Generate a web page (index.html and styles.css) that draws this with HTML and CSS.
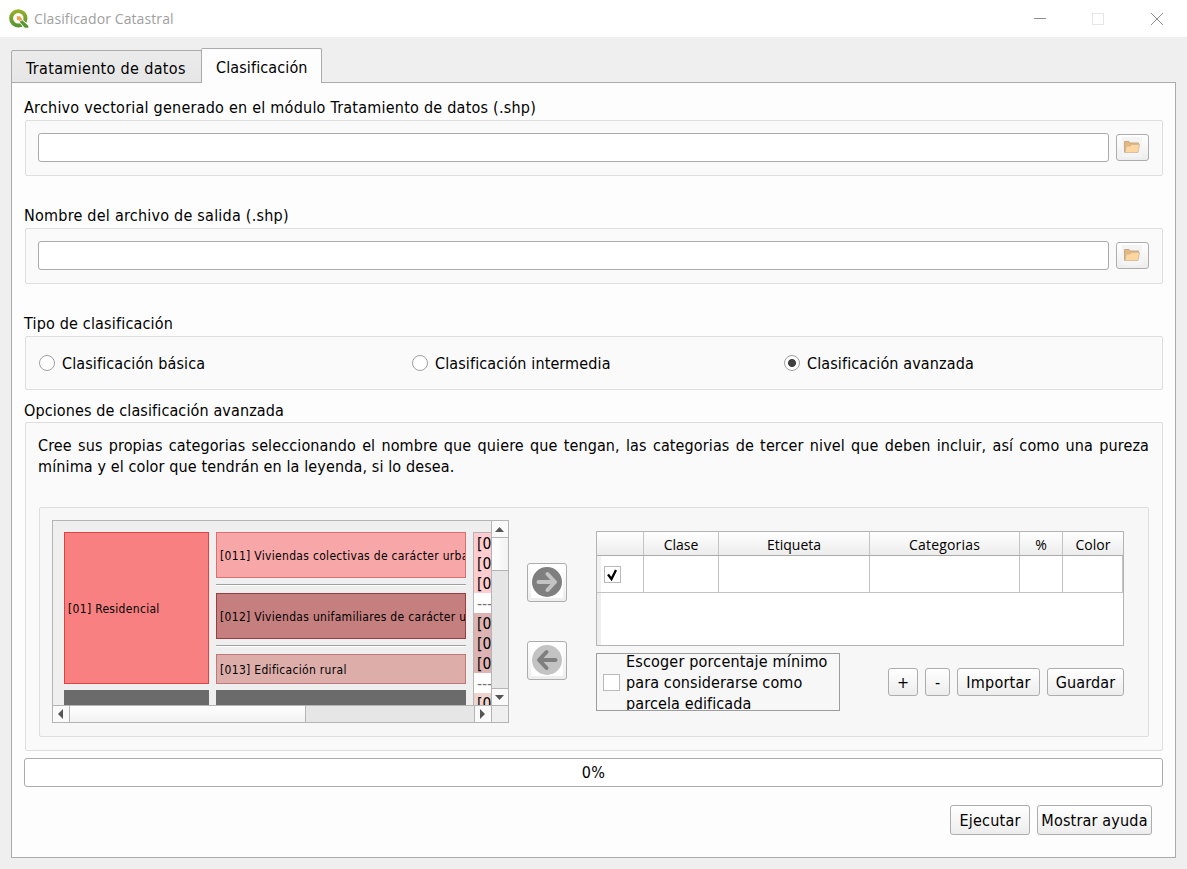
FILE: index.html
```html
<!DOCTYPE html>
<html lang="es">
<head>
<meta charset="utf-8">
<title>Clasificador Catastral</title>
<link rel="stylesheet" href="styles.css">
</head>
<body>
<header class="titlebar">
  <svg class="logo" width="20" height="20" viewBox="0 0 20 20">
    <defs><linearGradient id="q" x1="0" y1="0" x2="0" y2="1"><stop offset="0" stop-color="#93b023"/><stop offset="1" stop-color="#589632"/></linearGradient></defs>
    <circle cx="9.3" cy="9.3" r="7.2" fill="#fff" stroke="url(#q)" stroke-width="3.9"/>
    <path d="M9 12 L12.5 9.5 L20 16 V19.5 H15.5 Z" fill="#fff"/>
    <path d="M10.6 12.8 L13.2 11.2 L19.3 16.8 V18.8 H15.8 Z" fill="#589632"/>
    <path d="M7.8 7.3 H11.2 L13.2 10.4 L10.8 12 L7.8 10.4 Z" fill="#f0a04b"/>
  </svg>
  <span class="title">Clasificador Catastral</span>
  <div class="controls">
    <svg width="12" height="12" viewBox="0 0 12 12"><path d="M0 5.5H12" stroke="#8f8f8f"/></svg>
    <svg width="12" height="12" viewBox="0 0 12 12"><rect x=".5" y=".5" width="11" height="11" fill="none" stroke="#e6e6e6"/></svg>
    <svg class="close" width="12" height="12" viewBox="0 0 12 12"><path d="M0 0L12 12M12 0L0 12" stroke="#8f8f8f"/></svg>
  </div>
</header>
<nav class="tabs">
  <div class="tab"><span class="ls-xl">Tratamiento de datos</span></div>
  <div class="tab active"><span class="ls-s">Clasificación</span></div>
</nav>
<main class="panel">
  <div class="label first"><span class="ls-l">Archivo vectorial generado en el módulo Tratamiento de datos (.shp)</span></div>
  <section class="group file">
    <div class="input"></div>
    <div class="btn browse"><svg width="20" height="20" viewBox="0 0 20 20"><rect width="20" height="20" fill="#f4f4f4"/><path d="M2.5 15.5V4.5H7L8 6H16.5V9" fill="#e8b878" stroke="#c3a98a"/><path d="M3 15.5L4.5 9H8.5L9.5 7.5H17.5L16 15.5Z" fill="#ffd79e" stroke="#c9b79f" stroke-width=".8"/></svg></div>
  </section>
  <div class="label"><span class="ls-l">Nombre del archivo de salida (.shp)</span></div>
  <section class="group file">
    <div class="input"></div>
    <div class="btn browse"><svg width="20" height="20" viewBox="0 0 20 20"><rect width="20" height="20" fill="#f4f4f4"/><path d="M2.5 15.5V4.5H7L8 6H16.5V9" fill="#e8b878" stroke="#c3a98a"/><path d="M3 15.5L4.5 9H8.5L9.5 7.5H17.5L16 15.5Z" fill="#ffd79e" stroke="#c9b79f" stroke-width=".8"/></svg></div>
  </section>
  <div class="label"><span class="ls-m">Tipo de clasificación</span></div>
  <section class="group radios">
    <div class="option"><i class="radio"></i><span class="ls-s">Clasificación básica</span></div>
    <div class="option"><i class="radio"></i><span class="ls-s">Clasificación intermedia</span></div>
    <div class="option"><i class="radio on"></i><span class="ls-s">Clasificación avanzada</span></div>
  </section>
  <div class="label tight"><span class="ls-s">Opciones de clasificación avanzada</span></div>
  <section class="group advanced">
    <div class="intro">
      <p class="justified ls-s">Cree sus propias categorias seleccionando el nombre que quiere que tengan, las categorias de tercer nivel que deben incluir, así como una pureza</p>
      <p class="ls-s">mínima y el color que tendrán en la leyenda, si lo desea.</p>
    </div>
    <div class="subgroup">
      <div class="scroll">
        <div class="view">
          <div class="col1">
            <div class="cat residential">[01] Residencial</div>
            <div class="dark"></div>
          </div>
          <div class="col2">
            <div class="cat c011">[011] Viviendas colectivas de carácter urbano</div>
            <div class="sep"></div>
            <div class="cat c012">[012] Viviendas unifamiliares de carácter urbano</div>
            <div class="sep"></div>
            <div class="cat c013">[013] Edificación rural</div>
            <div class="dark"></div>
          </div>
          <div class="list">
            <div class="pink">[0</div><div class="pink">[0</div><div class="pink">[0</div>
            <div class="dash">---</div>
            <div class="rose">[0</div><div class="rose">[0</div><div class="rose">[0</div>
            <div class="dash">---</div>
            <div class="pale">[0</div>
          </div>
        </div>
        <div class="vbar">
          <div class="sb"><svg width="9" height="5" viewBox="0 0 9 5"><path d="M0 5L4.5 0L9 5Z" fill="#555"/></svg></div>
          <div class="vthumb"></div>
          <div class="sb bottom"><svg width="9" height="5" viewBox="0 0 9 5"><path d="M0 0L4.5 5L9 0Z" fill="#555"/></svg></div>
        </div>
        <div class="hbar">
          <div class="sb"><svg width="5" height="10" viewBox="0 0 5 10"><path d="M5 0L0 5L5 10Z" fill="#555"/></svg></div>
          <div class="hthumb"></div>
          <div class="sb end"><svg width="5" height="10" viewBox="0 0 5 10"><path d="M0 0L5 5L0 10Z" fill="#555"/></svg></div>
        </div>
        <div class="corner"></div>
      </div>
      <div class="movers">
        <div class="btn mover"><svg width="32" height="32" viewBox="0 0 32 32"><rect width="32" height="32" fill="#fff"/><circle cx="16" cy="16" r="15" fill="#7f7f7f"/><path d="M7.5 16H24M16.5 8L24 16L16.5 24" fill="none" stroke="#c3c3c3" stroke-width="4" stroke-linecap="round" stroke-linejoin="round"/></svg></div>
        <div class="btn mover"><svg width="32" height="32" viewBox="0 0 32 32"><rect width="32" height="32" fill="#fff"/><circle cx="16" cy="16" r="15" fill="#c3c3c3"/><path d="M24.5 16H9M15.5 8L8 16L15.5 24" fill="none" stroke="#7f7f7f" stroke-width="4" stroke-linecap="round" stroke-linejoin="round"/></svg></div>
      </div>
      <div class="right">
        <div class="table">
          <div class="row head"><div></div><div>Clase</div><div>Etiqueta</div><div class="ls-m">Categorias</div><div>%</div><div>Color</div></div>
          <div class="row data"><div class="first-cell"><i class="check"><svg width="15" height="15" viewBox="0 0 15 15"><path d="M3 7.5L6.5 12L11 3" fill="none" stroke="#000" stroke-width="2.3"/></svg></i></div><div></div><div></div><div></div><div></div><div></div></div>
          <div class="rest"></div>
        </div>
        <div class="under">
          <div class="minbox">
            <i class="check"></i>
            <div class="mintext"><p class="ls-m">Escoger porcentaje mínimo</p><p class="ls-s">para considerarse como</p><p class="ls-s">parcela edificada</p></div>
          </div>
          <div class="actions">
            <div class="btn plus">+</div><div class="btn minus">-</div><div class="btn import"><span class="ls-l">Importar</span></div><div class="btn save"><span class="ls-s">Guardar</span></div>
          </div>
        </div>
      </div>
    </div>
  </section>
  <div class="progress ls-xl">0%</div>
  <footer class="footer">
    <div class="btn run"><span class="ls-l">Ejecutar</span></div>
    <div class="btn help"><span class="ls-m">Mostrar ayuda</span></div>
  </footer>
</main>
</body>
</html>
```

FILE: styles.css
```css
* { box-sizing: border-box; }
body { margin: 0; width: 1187px; height: 869px; overflow: hidden; background: #efefef; color: #000; font: 16px/21px "DejaVu Sans Condensed", "DejaVu Sans", sans-serif; font-stretch: condensed; white-space: nowrap; }
p { margin: 0; }
svg { display: block; flex: none; }
.ls-s { letter-spacing: .12px; }
.ls-m { letter-spacing: .18px; }
.ls-l { letter-spacing: .235px; }
.ls-xl { letter-spacing: .33px; }
.titlebar { display: flex; align-items: center; height: 37px; background: #fff; padding-left: 9px; }
.title { margin-left: 5px; font: 14px/20px "Open Sans", sans-serif; letter-spacing: .1px; color: #a0a0a0; }
.controls { display: flex; gap: 46px; margin-left: auto; padding-right: 24px; }
.close { margin-left: 1px; }
.tabs { display: flex; align-items: flex-end; height: 46px; margin: 0 0 -1px 11px; }
.tab { width: 191px; height: 33px; border: 1px solid #ababab; border-radius: 2px 2px 0 0; background: linear-gradient(#ebebeb, #e6e6e6); padding: 7px 0 0 14px; }
.tab.active { position: relative; width: 121px; height: 35px; margin-left: -1px; background: #fdfdfd; border-bottom: 0; padding-top: 8px; }
.panel { height: 776px; width: 1165px; margin-left: 11px; border: 1px solid #ababab; background: #fdfdfd; padding: 0 12px 0 13px; }
.label { height: 52px; padding-top: 29px; margin-left: -1px; }
.label.first { height: 37px; padding-top: 14px; }
.label.tight { height: 32px; padding-top: 10px; }
.group { border: 1px solid #dedede; border-radius: 2px; background: #fafafa; padding: 12px; }
.file { display: flex; gap: 7px; height: 56px; }
.input { width: 1071px; height: 29px; border: 1px solid #ababab; border-radius: 3px; background: #fff; }
.btn { display: flex; align-items: center; justify-content: center; border: 1px solid #adadad; border-radius: 3px; background: linear-gradient(#fff, #ededed); }
.browse { width: 33px; height: 27px; margin-top: 1px; padding: 0 1px 1px 0; }
.radios { display: grid; grid-template-columns: 373px 372px 1fr; align-items: center; height: 54px; padding: 0 0 0 13px; }
.option { display: flex; align-items: center; gap: 7px; }
.radio { width: 16px; height: 16px; border: 1px solid #a0a0a0; border-radius: 50%; background: #fff; }
.radio.on { background: radial-gradient(circle, #404040 3.6px, #fff 4.4px); }
.advanced { height: 329px; }
.justified { text-align: justify; text-align-last: justify; width: 1111px; }
.subgroup { display: flex; width: 1110px; height: 230px; margin: 30px 0 0 1px; border: 1px solid #dedede; border-radius: 2px; background: #f7f7f7; padding: 12px; }
.scroll { display: grid; grid-template: 184px 17px / 438px 17px; width: 457px; height: 203px; border: 1px solid #b4b4b4; background: #efefef; }
.view { display: grid; grid-template-columns: 145px 250px 18px; gap: 7px; padding: 11px 0 0 11px; overflow: hidden; font-size: 12px; line-height: 16px; letter-spacing: .31px; }
.cat { display: flex; align-items: center; padding: 2px 0 0 3px; overflow: hidden; border: 1px solid; }
.residential { height: 152px; background: #f88080; border-color: #dc4444; }
.dark { height: 20px; margin-top: 6px; background: #6b6b6b; }
.c011 { height: 46px; background: #f8a7a9; border-color: #de6e6e; }
.c012 { height: 46px; background: #c67f7f; border-color: #993e3e; }
.c013 { height: 30px; background: #ddadaa; border-color: #c07979; }
.sep { height: 2px; margin: 6px 0 7px; border-top: 1px solid #a0a0a0; background: #fff; }
.list { border: 1px solid #b4b4b4; border-width: 1px 0 0 1px; font-size: 15.5px; line-height: 22px; letter-spacing: 0; overflow: hidden; height: 173px; }
.list div { height: 20px; padding-left: 3px; overflow: hidden; }
.pink { background: #ffcccf; }
.rose { background: #ddb3b3; }
.pale { background: #efd3cf; }
.dash { background: #fff; color: #777; }
.vbar { display: flex; flex-direction: column; border-left: 1px solid #b4b4b4; background: #e6e6e6; }
.vbar .sb { height: 17px; padding-right: 1px; border-bottom: 1px solid #b4b4b4; }
.vbar .sb.bottom { margin-top: auto; border-top: 1px solid #b4b4b4; border-bottom: 0; }
.sb { display: flex; align-items: center; justify-content: center; background: #fafafa; }
.vthumb { height: 33px; border-bottom: 1px solid #b4b4b4; background: linear-gradient(90deg, #fff, #f2f2f2); }
.hbar { display: flex; border-top: 1px solid #b4b4b4; background: #e6e6e6; }
.hbar .sb { width: 17px; padding-right: 1px; border-right: 1px solid #b4b4b4; }
.hbar .sb.end { margin-left: auto; border-left: 1px solid #b4b4b4; border-right: 0; }
.hthumb { width: 236px; border-right: 1px solid #b4b4b4; background: linear-gradient(#fff, #f2f2f2); }
.corner { border: 1px solid #b4b4b4; border-width: 1px 0 0 1px; }
.movers { display: flex; flex-direction: column; gap: 39px; padding-top: 43px; margin-left: 18px; }
.mover { width: 40px; height: 39px; padding-bottom: 1px; }
.right { width: 528px; margin: 11px 0 0 29px; }
.table { display: flex; flex-direction: column; height: 115px; border: 1px solid #b4b4b4; background: #fff; }
.row { display: grid; grid-template-columns: 47px 75px 151px 150px 43px 60px; }
.head { height: 24px; border-bottom: 1px solid #ababab; background: linear-gradient(#fff, #ececec); font: 14px/25px "Open Sans", sans-serif; text-align: center; }
.row > div { border-right: 1px solid #c3c3c3; }
.head > div { height: 23px; }
.head > div:last-child { border: 0; }
.data { height: 37px; border-bottom: 1px solid #c3c3c3; }
.first-cell { display: flex; align-items: center; border-left: 4px solid #ababab; border-image: linear-gradient(90deg, #f2f2f2 75%, #ababab 75%) 0 0 0 4; padding-left: 3px; }
.row > .first-cell { border-right: 0; box-shadow: inset -1px 0 #c3c3c3; }
.check { display: block; flex: none; width: 17px; height: 17px; border: 1px solid #b9b9b9; background: #fff; }
.rest { flex: 1; border-left: 4px solid #efefef; }
.under { display: flex; margin-top: 7px; }
.minbox { display: flex; align-items: center; width: 244px; height: 58px; border: 1px solid #9d9d9d; padding-left: 6px; overflow: hidden; }
.mintext { margin-left: 6px; padding-top: 1px; }
.actions { display: flex; gap: 7px; margin: 15px 0 0 48px; height: 28px; }
.actions .btn { padding-top: 1px; }
.plus { width: 30px; } .minus { width: 25px; } .import { width: 83px; } .save { width: 77px; }
.progress { width: 1139px; height: 29px; margin: 7px 0 0 -1px; border: 1px solid #ababab; border-radius: 3px; background: #fff; text-align: center; line-height: 28px; }
.footer { display: flex; gap: 7px; margin: 18px 0 0 925px; height: 30px; }
.footer .btn { padding-top: 1px; }
.run { width: 80px; } .help { width: 115px; }
```
